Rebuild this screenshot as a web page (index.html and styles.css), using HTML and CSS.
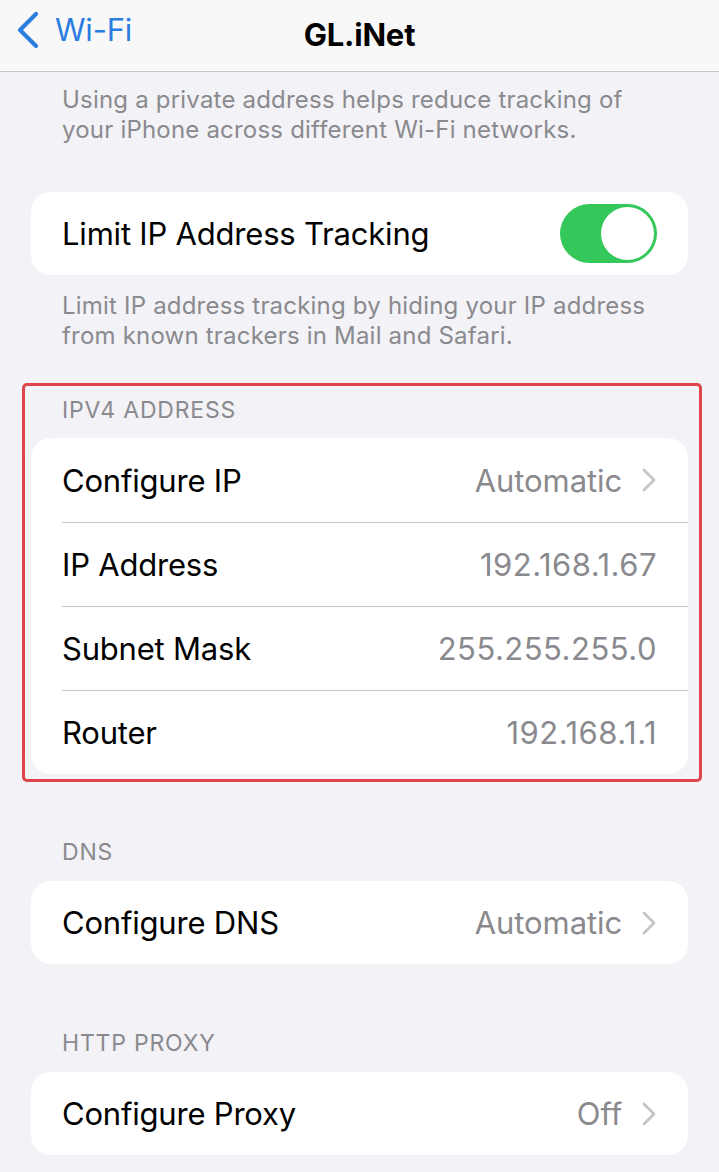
FILE: index.html
```html
<!DOCTYPE html>
<html lang="en">
<head>
<meta charset="utf-8">
<title>GL.iNet</title>
<link rel="stylesheet" href="styles.css">
</head>
<body>
<header class="nav">
  <a class="back">
    <svg class="back-chev" width="24" height="38" viewBox="0 0 24 38"><polyline points="20,3 4,19 20,35" fill="none" stroke="currentColor" stroke-width="4.2" stroke-linecap="round" stroke-linejoin="round"/></svg>
    <span class="back-label">Wi-Fi</span>
  </a>
  <h1 class="title">GL.iNet</h1>
</header>
<main class="content">
  <p class="footer first">Using a private address helps reduce tracking of your iPhone across different Wi-Fi networks.</p>

  <div class="card">
    <div class="row">
      <span class="label">Limit IP Address Tracking</span>
      <span class="toggle on"><span class="knob"></span></span>
    </div>
  </div>
  <p class="footer">Limit IP address tracking by hiding your IP address from known trackers in Mail and Safari.</p>

  <section class="highlight">
    <h2 class="section-head">IPV4 ADDRESS</h2>
    <div class="card">
      <div class="row">
        <span class="label">Configure IP</span>
        <span class="value">Automatic<svg class="chev" width="14" height="24" viewBox="0 0 14 24"><polyline points="2,2 12,12 2,22" fill="none" stroke="currentColor" stroke-width="2.8" stroke-linecap="round" stroke-linejoin="round"/></svg></span>
      </div>
      <div class="row">
        <span class="label">IP Address</span>
        <span class="value num">192.168.1.67</span>
      </div>
      <div class="row">
        <span class="label">Subnet Mask</span>
        <span class="value num">255.255.255.0</span>
      </div>
      <div class="row">
        <span class="label">Router</span>
        <span class="value num">192.168.1.1</span>
      </div>
    </div>
  </section>

  <section class="group">
    <h2 class="section-head">DNS</h2>
    <div class="card">
      <div class="row">
        <span class="label">Configure DNS</span>
        <span class="value">Automatic<svg class="chev" width="14" height="24" viewBox="0 0 14 24"><polyline points="2,2 12,12 2,22" fill="none" stroke="currentColor" stroke-width="2.8" stroke-linecap="round" stroke-linejoin="round"/></svg></span>
      </div>
    </div>
  </section>

  <section class="group">
    <h2 class="section-head">HTTP PROXY</h2>
    <div class="card">
      <div class="row">
        <span class="label">Configure Proxy</span>
        <span class="value">Off<svg class="chev" width="14" height="24" viewBox="0 0 14 24"><polyline points="2,2 12,12 2,22" fill="none" stroke="currentColor" stroke-width="2.8" stroke-linecap="round" stroke-linejoin="round"/></svg></span>
      </div>
    </div>
  </section>
</main>
</body>
</html>
```

FILE: styles.css
```css
* { box-sizing: border-box; }
html, body { margin: 0; padding: 0; }
body {
  background: #f2f2f7;
  font-family: Inter, "Noto Sans", "Liberation Sans", sans-serif;
  color: #000;
  width: 719px;
  height: 1172px;
  overflow: hidden;
}
.nav {
  height: 72px;
  background: #f8f8f8;
  border-bottom: 1px solid #c6c6c8;
  display: flex;
  align-items: center;
  justify-content: center;
  position: relative;
}
.back {
  position: absolute;
  left: 16px;
  top: 10px;
  display: flex;
  align-items: center;
  gap: 15px;
  color: #2a7de1;
}
.back-chev { display: block; }
.back-label {
  font-size: 31px;
  line-height: 40px;
  letter-spacing: -0.2px;
}
.title {
  margin: 0;
  font-size: 31px;
  font-weight: 700;
  line-height: 40px;
  letter-spacing: -0.2px;
  margin-top: -2px;
}
.content {
  padding: 0 31px;
}
.footer {
  margin: 16px 0 0;
  padding: 0 31px;
  font-size: 24px;
  line-height: 30px;
  color: #8a8a8e;
  letter-spacing: 0.2px;
}
.footer.first { margin-top: 13px; margin-bottom: 47px; }
.card {
  background: #fff;
  border-radius: 20px;
  overflow: hidden;
}
.row {
  height: 84px;
  display: flex;
  align-items: center;
  justify-content: space-between;
  padding: 0 31px;
  position: relative;
}
.card > .row:only-child { height: 83px; }
.row + .row::before {
  content: "";
  position: absolute;
  left: 31px;
  right: 0;
  top: 0;
  height: 1px;
  background: #c6c6c8;
}
.label {
  font-size: 31px;
  letter-spacing: -0.2px;
}
.value {
  font-size: 31px;
  color: #8a8a8e;
  letter-spacing: -0.1px;
  display: flex;
  align-items: center;
}
.value.num { letter-spacing: 0.5px; }
.chev {
  color: #c4c4c7;
  margin-left: 20px;
  margin-right: 1px;
}
.toggle {
  width: 97px;
  height: 59px;
  border-radius: 30px;
  background: #34c759;
  display: flex;
  align-items: center;
  justify-content: flex-end;
  padding: 3px;
}
.knob {
  width: 53px;
  height: 53px;
  border-radius: 50%;
  background: #fff;
}
.highlight {
  margin: 32px -14px 0 -9px;
  padding: 10px 11px 5px 6px;
  border: 3px solid #e0454b;
  border-radius: 5px;
}
.section-head {
  margin: 0 0 14px;
  padding: 0 31px;
  font-size: 23px;
  line-height: 28px;
  font-weight: 400;
  color: #8a8a8e;
  letter-spacing: 0.8px;
}
.group { margin-top: 56px; }
.group + .group { margin-top: 65px; }
.group .section-head { margin-bottom: 15px; }
```
